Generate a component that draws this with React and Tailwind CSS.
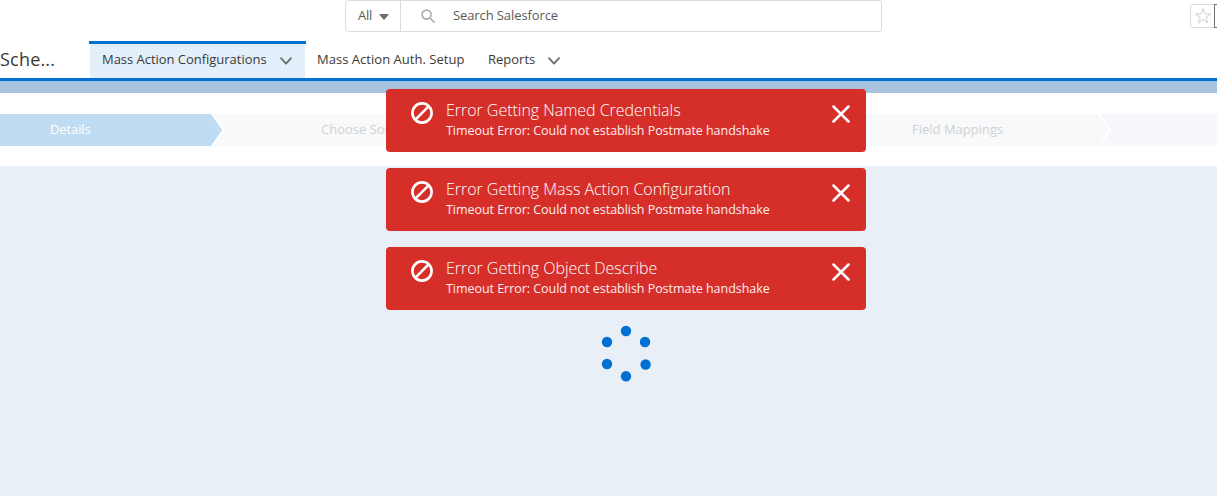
import React from "react";

function Chevron({ className }) {
  return (
    <svg className={className} width="12" height="8" viewBox="0 0 12 8" fill="none" stroke="#706e6b" strokeWidth="1.9" strokeLinecap="round" strokeLinejoin="round">
      <path d="M1 1.2 6 6.6 11 1.2" />
    </svg>
  );
}

function GlobalHeader() {
  return (
    <header className="flex h-[41px] items-start pl-[345px]">
      <div className="flex h-8 w-[537px] shrink-0 rounded-[4px] border border-[#dddbda] text-[13px] text-[#5c5a58]">
        <div className="flex w-[55px] items-center border-r border-[#dddbda] pl-3">
          <span className="w-[21px] tracking-[-0.3px]">All</span>
          <svg width="10" height="6" viewBox="0 0 10 6" className="mt-0.5" fill="#706e6b">
            <path d="M.8 0h8.4q.8 0 .4.7L5.6 5.6q-.6.6-1.2 0L.4.7Q0 0 .8 0z" />
          </svg>
        </div>
        <div className="flex items-center pl-5">
          <svg width="14" height="14" viewBox="0 0 14 14" fill="none" stroke="#b0adab" strokeWidth="1.7" strokeLinecap="round">
            <circle cx="5.6" cy="5.6" r="4.5" />
            <path d="m9 9 4 4" />
          </svg>
          <span className="ml-[18px] tracking-[-0.1px]">Search Salesforce</span>
        </div>
      </div>
      <div className="ml-auto mt-1 flex h-6 w-[27px] shrink-0 overflow-hidden">
        <div className="flex w-6 items-center justify-center rounded-l-[4px] border border-r-0 border-[#dddbda]">
          <svg width="18" height="18" viewBox="0 0 18 18" fill="none" stroke="#dddbda" strokeWidth="1.3" strokeLinejoin="round">
            <path d="m9 1.5 1.9 5.4h5.6L12 10.3l1.6 5.5L9 12.5l-4.600 3.300L6 10.300 1.500 6.900h5.600z" />
          </svg>
        </div>
        <div className="w-[3px] border-y border-l border-[#706e6b]" />
      </div>
    </header>
  );
}

function NavBar() {
  return (
    <nav className="flex h-10 border-b-[3px] border-[#0070d2] text-[13px] text-[#3b3937]">
      <div className="flex w-[89px] items-center text-[18px] tracking-[0.2px]">Sche...</div>
      <div className="flex w-[217px] flex-col">
        <div className="h-[3px] bg-[#0070d2]" />
        <div className="mx-px flex flex-1 items-center bg-[#e3effa] pb-[3px] pl-3">
          <span className="w-[178px] whitespace-nowrap tracking-[-0.03px]">Mass Action Configurations</span>
          <Chevron className="mt-[3px]" />
        </div>
      </div>
      <div className="flex items-center pl-[11px] whitespace-nowrap">
        <span className="w-[171px] tracking-[0.03px]">Mass Action Auth. Setup</span>
        <span className="w-[60px]">Reports</span>
        <Chevron className="mt-[3px]" />
      </div>
    </nav>
  );
}

function ProgressPath() {
  return (
    <section className="h-[73px] bg-white pt-[21px]">
      <div className="flex h-8 overflow-hidden bg-[#f7f9fb] text-[13px] text-[#d1d1d1]">
        <div className="flex w-[225px] shrink-0">
          <div className="flex w-[211px] items-center bg-[#c0dcf3] pl-[50px] font-medium tracking-[-0.1px] text-white">Details</div>
          <svg width="14" height="32" viewBox="0 0 14 32">
            <path d="M0 0 11.500 16 0 32z" fill="#c0dcf3" />
            <path d="M1 -.5 12.500 16 1 32.500" fill="none" stroke="#fff" strokeWidth="2" />
          </svg>
        </div>
        <div className="flex w-[687px] shrink-0 items-center pl-24">Choose Source</div>
        <div className="flex w-[185px] shrink-0 items-center">Field Mappings</div>
        <svg width="15" height="32" viewBox="0 0 15 32" className="shrink-0">
          <path d="M1.500 -.5 13 16 1.500 32.500H15V-.5z" fill="#f7f8fc" />
          <path d="M1.500 -.5 13 16 1.500 32.500" fill="none" stroke="#fff" strokeWidth="2" />
        </svg>
        <div className="flex-1 bg-[#f7f8fc]" />
      </div>
    </section>
  );
}

function Toast({ title }) {
  return (
    <div className="flex h-[63px] rounded-[4px] bg-[#d62f2a] pl-[25px] pr-4 text-white">
      <svg width="22" height="22" viewBox="0 0 22 22" className="mt-[13px] shrink-0" fill="none" stroke="#fff" strokeWidth="2.6">
        <circle cx="11" cy="11" r="9.600" />
        <path d="M4.700 17.300 17.300 4.700" />
      </svg>
      <div className="ml-[13px] flex-1 pt-[11px] whitespace-nowrap">
        <div className="text-[16px] leading-5 font-light tracking-[-0.03px]">{title}</div>
        <div className="text-[12.5px] leading-[22px] tracking-[-0.04px] text-[#fdeeee]">Timeout Error: Could not establish Postmate handshake</div>
      </div>
      <svg width="18" height="18" viewBox="0 0 18 18" className="mt-4 shrink-0" fill="none" stroke="#fff" strokeWidth="2.500" strokeLinecap="round">
        <path d="M1.500 1.500 16.500 16.500M16.500 1.500 1.500 16.500" />
      </svg>
    </div>
  );
}

function Spinner() {
  return (
    <svg width="52" height="58" viewBox="0 0 52 58" className="absolute left-[600px] top-[325px]" fill="#0070d2">
      <circle cx="26" cy="6" r="5.200" />
      <circle cx="45" cy="17" r="5.200" />
      <circle cx="45.600" cy="39.500" r="5.200" />
      <circle cx="26" cy="51.200" r="5.200" />
      <circle cx="7" cy="39" r="5.200" />
      <circle cx="7" cy="17" r="5.200" />
    </svg>
  );
}

export default function App() {
  return (
    <div className="relative flex h-[496px] w-[1217px] flex-col overflow-hidden bg-white font-['Open_Sans','Noto_Sans',sans-serif]">
      <GlobalHeader />
      <NavBar />
      <div className="h-3 bg-[#a8c3df]" />
      <ProgressPath />
      <main className="flex-1 bg-[#e8eff7]" />
      <div className="absolute left-[386px] top-[89px] flex w-[480px] flex-col gap-4">
        <Toast title="Error Getting Named Credentials" />
        <Toast title="Error Getting Mass Action Configuration" />
        <Toast title="Error Getting Object Describe" />
      </div>
      <Spinner />
    </div>
  );
}
